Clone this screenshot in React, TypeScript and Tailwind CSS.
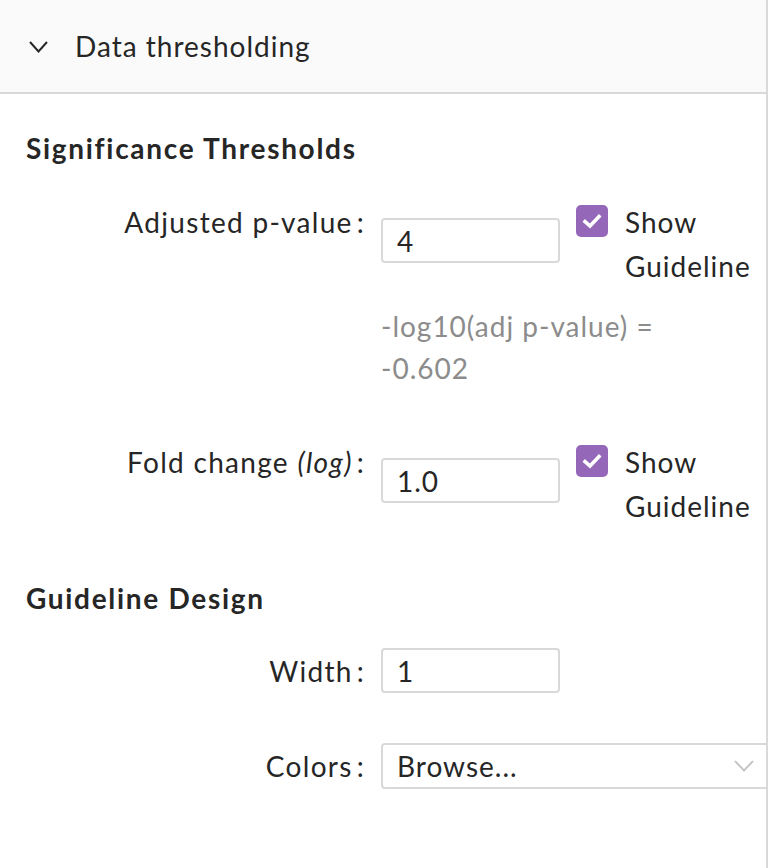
const font = { fontFamily: 'Lato, "Open Sans", sans-serif' };

function Check() {
  return (
    <span className="mt-[5px] flex h-[32px] w-[32px] shrink-0 items-center justify-center rounded-[5px] bg-[#9467b8]">
      <svg width="20" height="16" viewBox="0 0 20 16" fill="none">
        <path d="M3 8.5 L8 13 L17 3.5" stroke="white" strokeWidth="3.6" strokeLinecap="square" />
      </svg>
    </span>
  );
}

function Label({ children }: { children: React.ReactNode }) {
  return (
    <div className="w-[355px] shrink-0 pr-[16px] text-right leading-[44px] tracking-[1.3px] text-[#262626]">
      {children}
      <span className="ml-[4px]">:</span>
    </div>
  );
}

function ThresholdRow({ label, value, help }: { label: React.ReactNode; value: string; help?: string[] }) {
  return (
    <div className="flex items-start">
      <Label>{label}</Label>
      <div className="flex flex-col">
        <div className="flex items-start">
          <input
            readOnly
            value={value}
            className="mt-[18px] h-[45px] w-[179px] rounded-[4px] border-2 border-[#d9d9d9] px-[14px] text-[28px] tracking-[1px] text-[#262626] outline-none"
          />
          <label className="ml-[16px] flex items-start gap-[17px]">
            <Check />
            <span className="leading-[44px] text-[#262626]">
              Show
              <br />
              Guideline
            </span>
          </label>
        </div>
        {help && (
          <div className="mt-[17px] w-[340px] leading-[42px] text-[#8c8c8c]">
            {help.map((h) => (
              <div key={h}>{h}</div>
            ))}
          </div>
        )}
      </div>
    </div>
  );
}

export default function App() {
  return (
    <div style={font} className="h-[868px] w-[768px] border-r-2 border-[#d9d9d9] bg-white text-[28px] tracking-[1px]">
      <div className="flex h-[94px] items-center border-b-2 border-[#d9d9d9] bg-[#fafafa]">
        <svg className="ml-[29px] mt-[1px]" width="19" height="12" viewBox="0 0 19 12" fill="none">
          <path d="M1 1 L9.5 10.5 L18 1" stroke="#262626" strokeWidth="2" />
        </svg>
        <span className="ml-[27px] text-[#262626]">Data thresholding</span>
      </div>

      <div className="pl-[26px]">
        <h2 className="mt-[32px] font-bold leading-[44px] tracking-[1.7px] text-[#262626]">Significance Thresholds</h2>

        <div className="mt-[30px]">
          <ThresholdRow label="Adjusted p-value" value="4" help={['-log10(adj p-value) =', '-0.602']} />
        </div>

        <div className="mt-[51px]">
          <ThresholdRow
            label={
              <>
                Fold change <i>(log)</i>
              </>
            }
            value="1.0"
          />
        </div>

        <h2 className="mt-[48px] font-bold leading-[44px] tracking-[1.7px] text-[#262626]">Guideline Design</h2>

        <div className="mt-[28px] flex items-center">
          <Label>Width</Label>
          <input
            readOnly
            value="1"
            className="h-[45px] w-[179px] rounded-[4px] border-2 border-[#d9d9d9] px-[14px] text-[28px] tracking-[1px] text-[#262626] outline-none"
          />
        </div>

        <div className="mt-[50px] flex items-center">
          <Label>Colors</Label>
          <div className="flex h-[46px] flex-1 items-center justify-between rounded-l-[4px] border-2 border-r-0 border-[#d9d9d9] pl-[14px] pr-[12px] text-[#262626]">
            <span>Browse...</span>
            <svg width="20" height="12" viewBox="0 0 20 12" fill="none">
              <path d="M1 1 L10 10.5 L19 1" stroke="#bfbfbf" strokeWidth="1.8" />
            </svg>
          </div>
        </div>
      </div>
    </div>
  );
}
